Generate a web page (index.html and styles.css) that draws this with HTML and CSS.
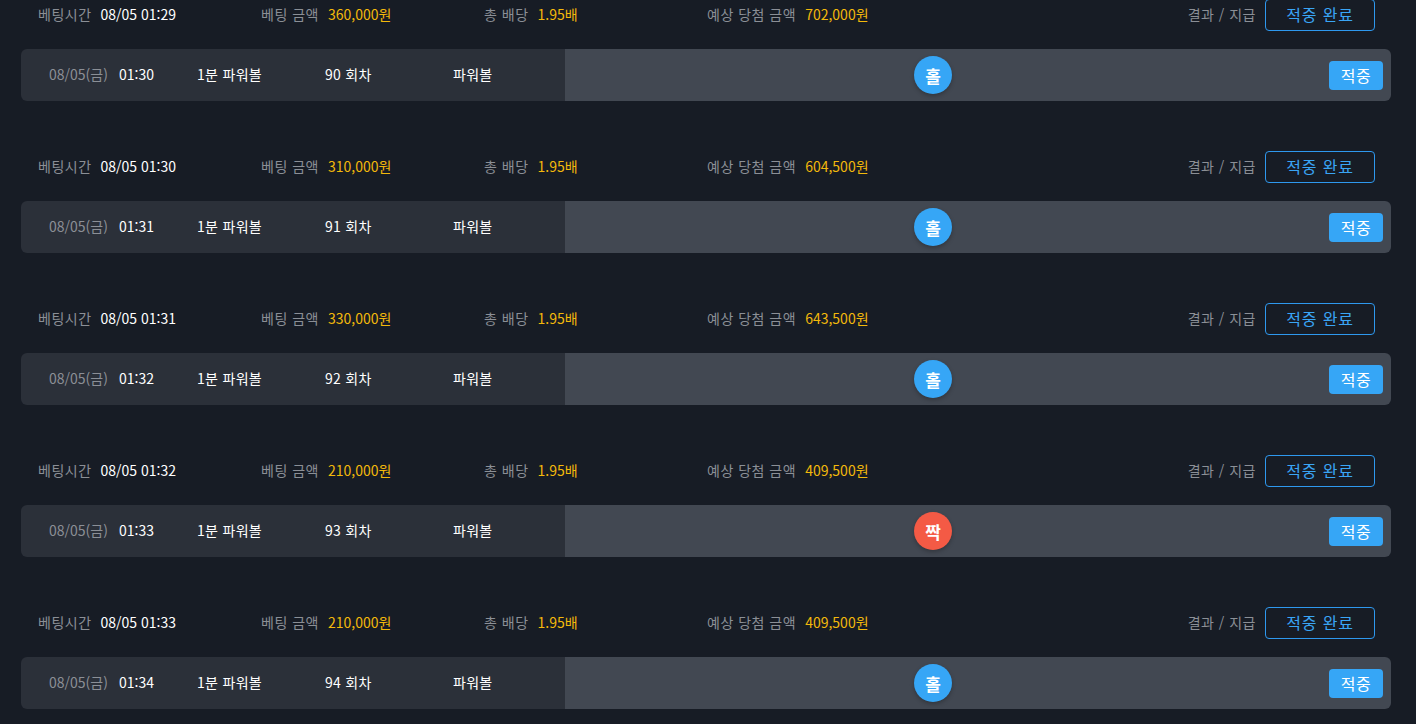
FILE: index.html
```html
<!DOCTYPE html>
<html lang="ko">
<head>
<meta charset="utf-8">
<link rel="stylesheet" href="styles.css">
</head>
<body>
<div class="list">
  <div class="block">
    <div class="head">
      <div class="col"><span class="lbl">베팅시간</span><span class="val">08/05 01:29</span></div>
      <div class="col"><span class="lbl">베팅 금액</span><span class="amt">360,000원</span></div>
      <div class="col"><span class="lbl">총 배당</span><span class="amt">1.95배</span></div>
      <div class="col"><span class="lbl">예상 당첨 금액</span><span class="amt">702,000원</span></div>
      <div class="result"><span class="lbl">결과 / 지급</span><span class="done">적중 완료</span></div>
    </div>
    <div class="card">
      <div class="info">
        <span class="date">08/05(금)</span><span class="time">01:30</span>
        <span class="c game">1분 파워볼</span><span class="c round">90 회차</span><span class="c type">파워볼</span>
      </div>
      <div class="pick">
        <div class="ball-area"><span class="ball odd">홀</span></div>
        <div class="hit-cell"><span class="hit">적중</span></div>
      </div>
    </div>
  </div>
  <div class="block">
    <div class="head">
      <div class="col"><span class="lbl">베팅시간</span><span class="val">08/05 01:30</span></div>
      <div class="col"><span class="lbl">베팅 금액</span><span class="amt">310,000원</span></div>
      <div class="col"><span class="lbl">총 배당</span><span class="amt">1.95배</span></div>
      <div class="col"><span class="lbl">예상 당첨 금액</span><span class="amt">604,500원</span></div>
      <div class="result"><span class="lbl">결과 / 지급</span><span class="done">적중 완료</span></div>
    </div>
    <div class="card">
      <div class="info">
        <span class="date">08/05(금)</span><span class="time">01:31</span>
        <span class="c game">1분 파워볼</span><span class="c round">91 회차</span><span class="c type">파워볼</span>
      </div>
      <div class="pick">
        <div class="ball-area"><span class="ball odd">홀</span></div>
        <div class="hit-cell"><span class="hit">적중</span></div>
      </div>
    </div>
  </div>
  <div class="block">
    <div class="head">
      <div class="col"><span class="lbl">베팅시간</span><span class="val">08/05 01:31</span></div>
      <div class="col"><span class="lbl">베팅 금액</span><span class="amt">330,000원</span></div>
      <div class="col"><span class="lbl">총 배당</span><span class="amt">1.95배</span></div>
      <div class="col"><span class="lbl">예상 당첨 금액</span><span class="amt">643,500원</span></div>
      <div class="result"><span class="lbl">결과 / 지급</span><span class="done">적중 완료</span></div>
    </div>
    <div class="card">
      <div class="info">
        <span class="date">08/05(금)</span><span class="time">01:32</span>
        <span class="c game">1분 파워볼</span><span class="c round">92 회차</span><span class="c type">파워볼</span>
      </div>
      <div class="pick">
        <div class="ball-area"><span class="ball odd">홀</span></div>
        <div class="hit-cell"><span class="hit">적중</span></div>
      </div>
    </div>
  </div>
  <div class="block">
    <div class="head">
      <div class="col"><span class="lbl">베팅시간</span><span class="val">08/05 01:32</span></div>
      <div class="col"><span class="lbl">베팅 금액</span><span class="amt">210,000원</span></div>
      <div class="col"><span class="lbl">총 배당</span><span class="amt">1.95배</span></div>
      <div class="col"><span class="lbl">예상 당첨 금액</span><span class="amt">409,500원</span></div>
      <div class="result"><span class="lbl">결과 / 지급</span><span class="done">적중 완료</span></div>
    </div>
    <div class="card">
      <div class="info">
        <span class="date">08/05(금)</span><span class="time">01:33</span>
        <span class="c game">1분 파워볼</span><span class="c round">93 회차</span><span class="c type">파워볼</span>
      </div>
      <div class="pick">
        <div class="ball-area"><span class="ball even">짝</span></div>
        <div class="hit-cell"><span class="hit">적중</span></div>
      </div>
    </div>
  </div>
  <div class="block">
    <div class="head">
      <div class="col"><span class="lbl">베팅시간</span><span class="val">08/05 01:33</span></div>
      <div class="col"><span class="lbl">베팅 금액</span><span class="amt">210,000원</span></div>
      <div class="col"><span class="lbl">총 배당</span><span class="amt">1.95배</span></div>
      <div class="col"><span class="lbl">예상 당첨 금액</span><span class="amt">409,500원</span></div>
      <div class="result"><span class="lbl">결과 / 지급</span><span class="done">적중 완료</span></div>
    </div>
    <div class="card">
      <div class="info">
        <span class="date">08/05(금)</span><span class="time">01:34</span>
        <span class="c game">1분 파워볼</span><span class="c round">94 회차</span><span class="c type">파워볼</span>
      </div>
      <div class="pick">
        <div class="ball-area"><span class="ball odd">홀</span></div>
        <div class="hit-cell"><span class="hit">적중</span></div>
      </div>
    </div>
  </div>
</div>
</body>
</html>
```
FILE: styles.css
```css
html, body {
  margin: 0;
  padding: 0;
  background: #171c25;
  height: 100%;
  overflow: hidden;
}
body {
  font-family: "Noto Sans CJK KR", "Noto Sans", sans-serif;
  font-size: 14px;
  color: #ffffff;
}
.list {
  margin-top: -1px;
  padding: 0 25px 0 21px;
}
.block {
  margin-bottom: 50px;
}
.head {
  display: flex;
  align-items: center;
  height: 32px;
  padding: 0 16px 0 17px;
  margin-bottom: 18px;
}
.col {
  width: 223px;
  flex-shrink: 0;
  display: flex;
  align-items: center;
  gap: 9px;
  white-space: nowrap;
  padding-bottom: 3px;
}
.lbl {
  color: #8b8f96;
  letter-spacing: 0.5px;
}
.val {
  color: #ffffff;
}
.amt {
  color: #f3b90b;
}
.result {
  margin-left: auto;
  display: flex;
  align-items: center;
  gap: 9px;
}
.result .lbl {
  padding-bottom: 3px;
}
.done {
  box-sizing: border-box;
  width: 110px;
  height: 32px;
  border: 1px solid #2e98ee;
  border-radius: 4px;
  color: #3aa5f5;
  font-size: 16px;
  letter-spacing: 0.8px;
  display: flex;
  align-items: center;
  justify-content: center;
  padding-bottom: 2px;
}
.card {
  display: flex;
  height: 52px;
  border-radius: 6px;
  overflow: hidden;
}
.info {
  width: 544px;
  flex-shrink: 0;
  background: #2b3039;
  display: flex;
  align-items: center;
  padding: 0 0 3px 28px;
  box-sizing: border-box;
  white-space: nowrap;
}
.info span {
  flex-shrink: 0;
}
.date {
  color: #8b8f96;
  width: 70px;
}
.time {
  width: 78px;
}
.c {
  width: 128px;
  letter-spacing: 0.3px;
}
.c.type {
  width: auto;
}
.pick {
  flex: 1;
  background: #424852;
  display: flex;
  align-items: center;
}
.ball-area {
  flex: 1;
  display: flex;
  justify-content: center;
}
.ball {
  width: 38px;
  height: 38px;
  border-radius: 50%;
  display: flex;
  align-items: center;
  justify-content: center;
  font-size: 17px;
  font-weight: 700;
  color: #ffffff;
  box-shadow: 0 2px 4px rgba(0,0,0,0.25);
}
.odd {
  background: #36a6f6;
}
.even {
  background: #f45a45;
}
.hit-cell {
  width: 90px;
  display: flex;
  justify-content: flex-end;
  padding-right: 8px;
  box-sizing: border-box;
}
.hit {
  width: 54px;
  height: 29px;
  border-radius: 4px;
  background: #36a6f6;
  color: #ffffff;
  font-size: 16px;
  letter-spacing: 0.5px;
  display: flex;
  align-items: center;
  justify-content: center;
  padding-bottom: 1px;
  box-sizing: border-box;
}
```
